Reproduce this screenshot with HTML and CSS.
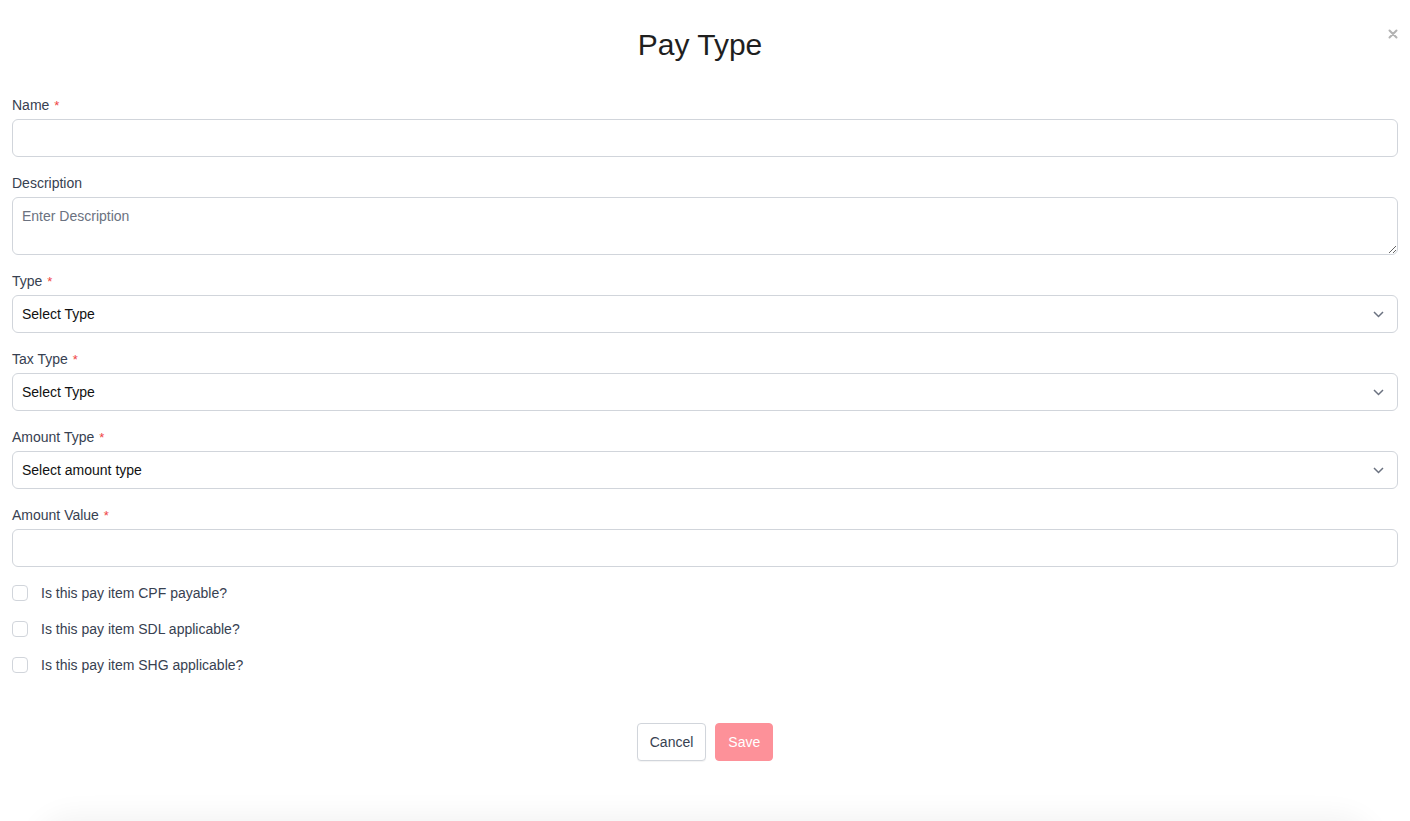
FILE: index.html
```html
<!DOCTYPE html>
<html lang="en">
<head>
<meta charset="utf-8">
<title>Pay Type</title>
<link rel="stylesheet" href="styles.css">
</head>
<body>
<div class="modal">
  <header class="modal-header">
    <h1 class="modal-title">Pay Type</h1>
    <button class="close-btn" type="button" aria-label="Close">
      <svg width="10" height="10" viewBox="0 0 10 10"><path d="M1.5 1.5 L8.5 8.5 M8.5 1.5 L1.5 8.5" stroke="#b3b3b3" stroke-width="2" stroke-linecap="round"/></svg>
    </button>
  </header>
  <form class="form">
    <div class="field">
      <label class="label">Name <span class="req">*</span></label>
      <input class="control" type="text">
    </div>
    <div class="field">
      <label class="label">Description</label>
      <textarea class="control textarea" placeholder="Enter Description"></textarea>
    </div>
    <div class="field">
      <label class="label">Type <span class="req">*</span></label>
      <div class="select-wrap">
        <div class="control select">Select Type</div>
        <svg class="chev" width="11" height="7" viewBox="0 0 11 7"><path d="M1 1 L5.5 5.5 L10 1" fill="none" stroke="#6b7280" stroke-width="1.5"/></svg>
      </div>
    </div>
    <div class="field">
      <label class="label">Tax Type <span class="req">*</span></label>
      <div class="select-wrap">
        <div class="control select">Select Type</div>
        <svg class="chev" width="11" height="7" viewBox="0 0 11 7"><path d="M1 1 L5.5 5.5 L10 1" fill="none" stroke="#6b7280" stroke-width="1.5"/></svg>
      </div>
    </div>
    <div class="field">
      <label class="label">Amount Type <span class="req">*</span></label>
      <div class="select-wrap">
        <div class="control select">Select amount type</div>
        <svg class="chev" width="11" height="7" viewBox="0 0 11 7"><path d="M1 1 L5.5 5.5 L10 1" fill="none" stroke="#6b7280" stroke-width="1.5"/></svg>
      </div>
    </div>
    <div class="field">
      <label class="label">Amount Value <span class="req">*</span></label>
      <input class="control" type="text">
    </div>
    <div class="checks">
      <label class="check"><span class="box"></span><span>Is this pay item CPF payable?</span></label>
      <label class="check"><span class="box"></span><span>Is this pay item SDL applicable?</span></label>
      <label class="check"><span class="box"></span><span>Is this pay item SHG applicable?</span></label>
    </div>
    <div class="actions">
      <button class="btn btn-cancel" type="button">Cancel</button>
      <button class="btn btn-save" type="button">Save</button>
    </div>
  </form>
  <div class="below"></div>
</div>
</body>
</html>
```

FILE: styles.css
```css
* { box-sizing: border-box; }
html, body { margin: 0; padding: 0; background: #fff; overflow: hidden; }
body {
  font-family: "Liberation Sans", Arial, sans-serif;
  font-size: 14px;
  color: #374151;
}
.modal { padding: 0 12px; }
.modal-header {
  position: relative;
  padding-top: 27px;
  padding-right: 10px;
}
.modal-title {
  margin: 0;
  text-align: center;
  font-size: 30px;
  line-height: 36px;
  font-weight: 400;
  color: #1f1f1f;
}
.close-btn {
  position: absolute;
  top: 27px;
  right: -2px;
  width: 14px;
  height: 14px;
  padding: 0;
  border: 0;
  background: none;
  display: flex;
  align-items: center;
  justify-content: center;
}
.form { margin-top: 32px; }
.field { display: flex; flex-direction: column; margin-bottom: 16px; }
.label {
  display: block;
  height: 20px;
  line-height: 20px;
  margin-bottom: 4px;
  color: #374151;
}
.req { color: #ef4444; margin-left: 1px; font-size: 13px; line-height: 0; }
.control {
  display: block;
  width: 100%;
  height: 38px;
  border: 1px solid #d1d5db;
  border-radius: 6px;
  padding: 0 9px;
  font-family: inherit;
  font-size: 14px;
  color: #111827;
  background: #fff;
  outline: none;
}
.textarea {
  height: 58px;
  padding: 8px 9px;
  line-height: 20px;
  resize: vertical;
}
.textarea::placeholder { color: #6b7280; }
.select-wrap { position: relative; }
.select { display: flex; align-items: center; color: #111; }
.chev { position: absolute; right: 14px; top: 16px; }
.checks { display: flex; flex-direction: column; gap: 16px; }
.check { display: flex; align-items: center; height: 20px; line-height: 20px; color: #374151; }
.box {
  width: 16px;
  height: 16px;
  border: 1px solid #d1d5db;
  border-radius: 4px;
  margin-right: 13px;
  background: #fff;
}
.actions {
  display: flex;
  justify-content: center;
  gap: 9px;
  margin-top: 48px;
}
.btn {
  height: 38px;
  padding: 0 12px;
  border-radius: 4px;
  font-family: inherit;
  font-size: 14px;
}
.btn-cancel {
  background: #fff;
  border: 1px solid #d1d5db;
  color: #374151;
  box-shadow: 0 1px 1px rgba(0,0,0,0.05);
}
.btn-save {
  background: #fd9199;
  border: 1px solid #fd9199;
  color: #fff;
}
.below {
  margin: 60px 22px 0;
  height: 120px;
  border-radius: 40px 40px 0 0;
  box-shadow: 0 -6px 28px rgba(0,0,0,0.05);
}
```
